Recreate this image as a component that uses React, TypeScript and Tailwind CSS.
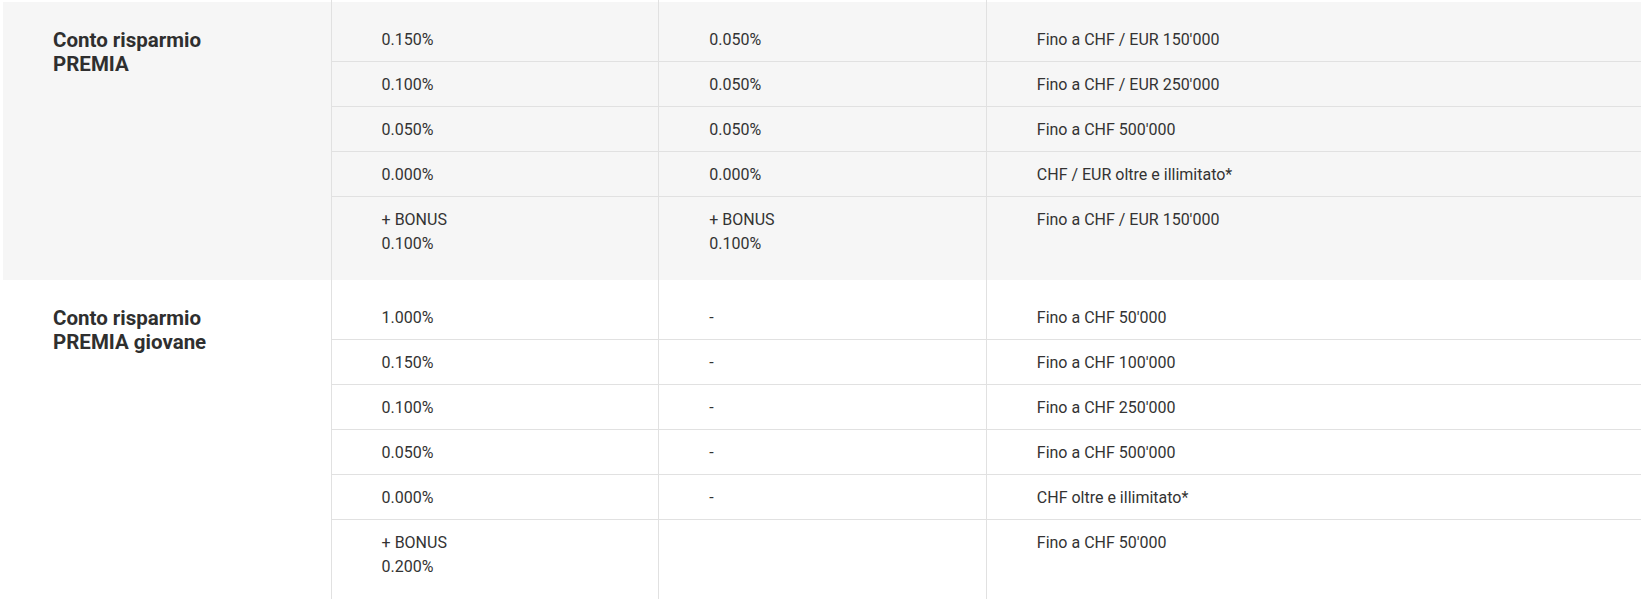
type Row = [string, string, string];

interface Section {
  title: [string, string];
  bg: string;
  rows: Row[];
  bonus: [string, string, string];
}

const sections: Section[] = [
  {
    title: ['Conto risparmio', 'PREMIA'],
    bg: 'bg-[#f6f6f6]',
    rows: [
      ['0.150%', '0.050%', "Fino a CHF / EUR 150'000"],
      ['0.100%', '0.050%', "Fino a CHF / EUR 250'000"],
      ['0.050%', '0.050%', "Fino a CHF 500'000"],
      ['0.000%', '0.000%', 'CHF / EUR oltre e illimitato*'],
    ],
    bonus: ['0.100%', '0.100%', "Fino a CHF / EUR 150'000"],
  },
  {
    title: ['Conto risparmio', 'PREMIA giovane'],
    bg: 'bg-white',
    rows: [
      ['1.000%', '-', "Fino a CHF 50'000"],
      ['0.150%', '-', "Fino a CHF 100'000"],
      ['0.100%', '-', "Fino a CHF 250'000"],
      ['0.050%', '-', "Fino a CHF 500'000"],
      ['0.000%', '-', 'CHF oltre e illimitato*'],
    ],
    bonus: ['0.200%', '', "Fino a CHF 50'000"],
  },
];

/**
 * One column of values for a section, drawn as stacked cells
 */
function ValueColumn({ values, bonus, isBonusRate }: { values: string[]; bonus: string; isBonusRate: boolean }) {
  return (
    <div className="flex flex-col border-l border-[#e1e1e1] py-[15px]">
      {values.map((v, i) => (
        <div key={i} className="h-[45px] border-b border-[#e1e1e1] px-[50px] pt-[11px] pb-[9px]">
          {v}
        </div>
      ))}
      <div className="h-[68px] px-[50px] pt-[11px] pb-[9px]">
        {isBonusRate && bonus ? (
          <>
            <div>+ BONUS</div>
            <div>{bonus}</div>
          </>
        ) : (
          bonus
        )}
      </div>
    </div>
  );
}

export default function App() {
  return (
    <div
      className="w-[1646px] bg-white pl-[3px] pr-[5px] text-[16px] leading-[24px] text-[#333]"
      style={{ fontFamily: 'Roboto, "Liberation Sans", sans-serif' }}
    >
      {/* Top sliver showing the column rules */}
      <div className="grid h-[2px] grid-cols-[1fr_1fr_1fr_2fr]">
        <div />
        <div className="border-l border-[#e1e1e1]" />
        <div className="border-l border-[#e1e1e1]" />
        <div className="border-l border-[#e1e1e1]" />
      </div>

      {sections.map((s, si) => (
        <div key={si} className={`grid grid-cols-[1fr_1fr_1fr_2fr] ${s.bg}`}>
          <div className="px-[50px] pt-[26px] text-[20.5px] font-bold leading-[24px] text-[#2f2f2f]">
            <div>{s.title[0]}</div>
            <div>{s.title[1]}</div>
          </div>
          <ValueColumn values={s.rows.map((r) => r[0])} bonus={s.bonus[0]} isBonusRate />
          <ValueColumn values={s.rows.map((r) => r[1])} bonus={s.bonus[1]} isBonusRate />
          <ValueColumn values={s.rows.map((r) => r[2])} bonus={s.bonus[2]} isBonusRate={false} />
        </div>
      ))}
    </div>
  );
}
